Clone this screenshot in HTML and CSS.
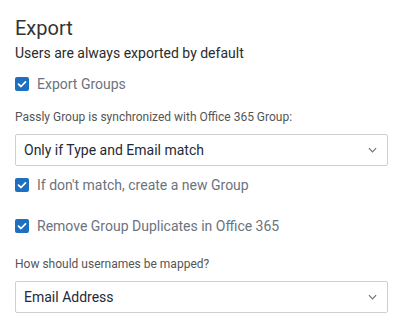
FILE: index.html
```html
<!DOCTYPE html>
<html lang="en">
<head>
    <meta charset="UTF-8">
    <meta name="viewport" content="width=device-width, initial-scale=1.0">
    <title>Export</title>
    <link rel="stylesheet" href="styles.css">
</head>
<body>
    <div class="panel">
        <h2>Export</h2>
        <p class="note">Users are always exported by default</p>

        <label class="check first">
            <span class="box"><svg viewBox="0 0 14 14"><path d="M3.5 7.2 L6 9.5 L10.5 4.8"/></svg></span>
            Export Groups
        </label>

        <div class="field-label">Passly Group is synchronized with Office 365 Group:</div>
        <div class="select">
            <span>Only if Type and Email match</span>
            <svg class="chevron" viewBox="0 0 10 6"><path d="M1 1 L5 5 L9 1"/></svg>
        </div>

        <label class="check after-select">
            <span class="box"><svg viewBox="0 0 14 14"><path d="M3.5 7.2 L6 9.5 L10.5 4.8"/></svg></span>
            If don't match, create a new Group
        </label>

        <label class="check">
            <span class="box"><svg viewBox="0 0 14 14"><path d="M3.5 7.2 L6 9.5 L10.5 4.8"/></svg></span>
            Remove Group Duplicates in Office 365
        </label>

        <div class="field-label spaced">How should usernames be mapped?</div>
        <div class="select">
            <span>Email Address</span>
            <svg class="chevron" viewBox="0 0 10 6"><path d="M1 1 L5 5 L9 1"/></svg>
        </div>
    </div>
</body>
</html>
```

FILE: styles.css
```css
body {
    margin: 0;
    font-family: Roboto, "Liberation Sans", sans-serif;
    background: #fff;
    color: #333;
}
.panel {
    padding: 16px 16px 0 15px;
    width: 373px;
}
h2 {
    font-size: 20px;
    font-weight: 400;
    margin: 0;
    line-height: 24px;
    color: #333;
}
.note {
    font-size: 14px;
    margin: 4px 0 0;
    line-height: 18px;
    color: #2b2b2b;
}
.check {
    display: flex;
    align-items: center;
    gap: 8px;
    font-size: 14px;
    color: #6b7380;
    line-height: 20px;
    margin-top: 21px;
}
.check.first {
    margin-top: 12px;
}
.check.after-select {
    margin-top: 9px;
}
.box {
    width: 14px;
    height: 14px;
    border-radius: 2px;
    background: #1f6fc1;
    display: flex;
}
.box svg {
    width: 14px;
    height: 14px;
}
.box path {
    fill: none;
    stroke: #fff;
    stroke-width: 1.7;
    stroke-linecap: round;
    stroke-linejoin: round;
}
.field-label {
    font-size: 12px;
    color: #555;
    margin-top: 15px;
    line-height: 16px;
}
.field-label.spaced {
    margin-top: 20px;
}
.select {
    margin-top: 9px;
    height: 32px;
    box-sizing: border-box;
    border: 1px solid #cfcfcf;
    border-radius: 2px;
    display: flex;
    align-items: center;
    justify-content: space-between;
    padding: 0 10px 0 8px;
    font-size: 14px;
    color: #1f2a36;
}
.chevron {
    width: 9px;
    height: 6px;
}
.chevron path {
    fill: none;
    stroke: #6b7380;
    stroke-width: 1.3;
}
```
